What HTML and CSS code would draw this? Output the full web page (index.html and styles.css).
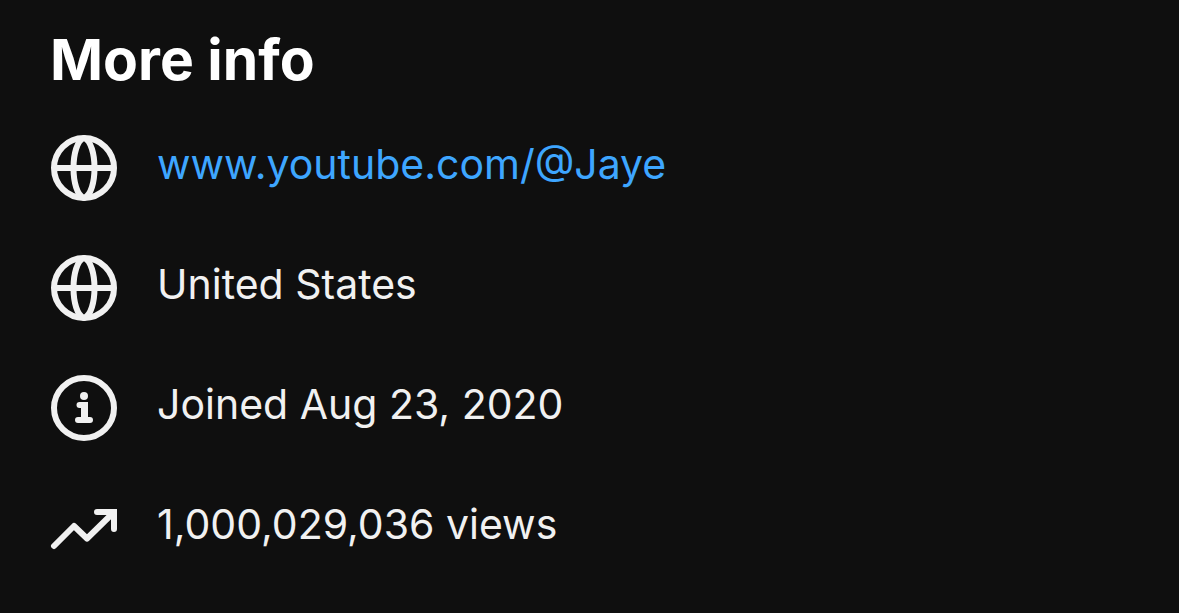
FILE: index.html
```html
<!DOCTYPE html>
<html lang="en">
<head>
<meta charset="utf-8">
<title>More info</title>
<link rel="stylesheet" href="styles.css">
</head>
<body>
<main class="info">
  <h1 class="title">More info</h1>
  <ul class="list">
    <li class="row">
      <svg class="icon" viewBox="0 0 68 68" aria-hidden="true"><circle cx="34" cy="34" r="30"/><path class="join" d="M34 4C20 9 20 59 34 64C48 59 48 9 34 4ZM4 34H64"/></svg>
      <a class="label link" href="https://www.youtube.com/@Jaye">www.youtube.com/@Jaye</a>
    </li>
    <li class="row">
      <svg class="icon" viewBox="0 0 68 68" aria-hidden="true"><circle cx="34" cy="34" r="30"/><path class="join" d="M34 4C20 9 20 59 34 64C48 59 48 9 34 4ZM4 34H64"/></svg>
      <span class="label">United States</span>
    </li>
    <li class="row">
      <svg class="icon" viewBox="0 0 68 68" aria-hidden="true"><circle cx="34" cy="34" r="30"/><circle class="solid" cx="34" cy="22" r="4"/><path class="round" d="M29.500 31H35V46M34 31V46M28 46H40"/></svg>
      <span class="label">Joined Aug 23, 2020</span>
    </li>
    <li class="row">
      <svg class="icon" viewBox="0 0 68 68" aria-hidden="true"><path class="round join" d="M4 52L24 32L37 44.500L62 20"/><path class="round" d="M47 18H64V35"/></svg>
      <span class="label">1,000,029,036 views</span>
    </li>
  </ul>
</main>
</body>
</html>
```
FILE: styles.css
```css
body {
  margin: 0;
  background: #0f0f0f;
  color: #f1f1f1;
  font-family: Inter, "Liberation Sans", sans-serif;
}
.info {
  padding: 24px 50px;
}
.title {
  margin: 0;
  color: #fff;
  font-size: 57px;
  line-height: 72px;
  font-weight: 700;
}
.list {
  margin: 38px 0 0;
  padding: 0;
  list-style: none;
  display: grid;
  gap: 52px;
}
.row {
  display: flex;
  gap: 39px;
}
.icon {
  flex: none;
  width: 68px;
  height: 68px;
  fill: none;
  stroke: #f1f1f1;
  stroke-width: 6;
}
.round {
  stroke-linecap: round;
}
.join {
  stroke-linejoin: round;
}
.solid {
  fill: #f1f1f1;
  stroke: none;
}
.label {
  font-size: 41px;
  line-height: 60px;
}
.link {
  color: #3ea6ff;
  text-decoration: none;
}
```
